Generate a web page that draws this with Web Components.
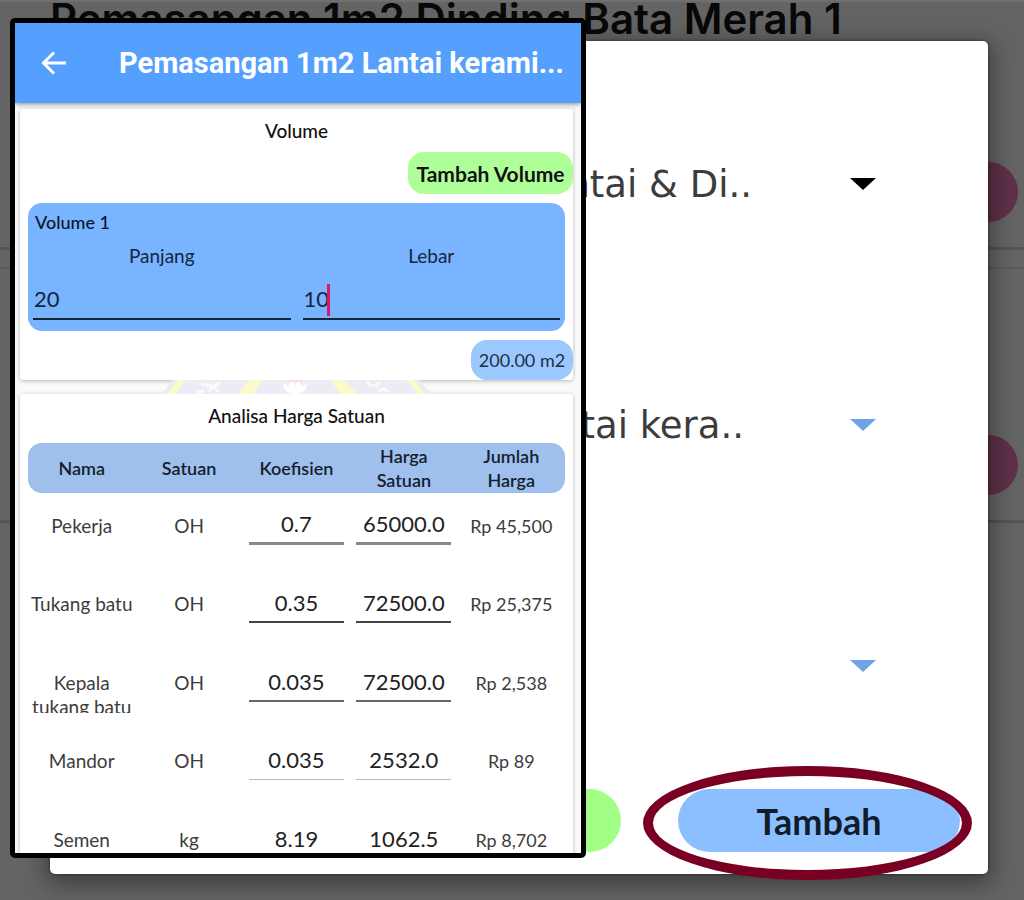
<!DOCTYPE html>
<html lang="id">
<head>
<meta charset="utf-8">
<meta name="viewport" content="width=device-width, initial-scale=1">
<title>Analisa Harga Satuan</title>
<style>
  html, body { margin: 0; height: 100%; }
  body { font-family: Lato, "Liberation Sans", sans-serif; color: #111; overflow: hidden; }
</style>
</head>
<body>
<rab-app></rab-app>
<script>
const define = (name, html, setup) => {
  const template = document.createElement('template');
  template.innerHTML = html;
  customElements.define(name, class extends HTMLElement {
    constructor() {
      super();
      this.attachShadow({ mode: 'open' }).append(template.content.cloneNode(true));
    }
    connectedCallback() { if (setup) setup(this, this.shadowRoot); }
  });
};

/* Dimmed list of work items behind the dialog */
define('work-list', `
<style>
  :host { display: block; overflow: hidden; background: #646464; border-top: 2px solid #707070; box-sizing: border-box; }
  h2 { margin: 0 0 0 50px; height: 116px; font: 600 42px/34px Inter, sans-serif; color: #080808; white-space: nowrap; }
  section { box-sizing: border-box; display: flex; justify-content: flex-end; padding-right: 6px; border-bottom: 3px solid #545454; }
  .first { height: 132px; padding-top: 44px; }
  .second { height: 256px; margin-top: 17px; padding-top: 166px; border-top: 2px solid #5b5b5b; }
  button { width: 150px; height: 60px; border: 0; border-radius: 30px; background: #5f3148; }
</style>
<h2>Pemasangan 1m2 Dinding Bata Merah 1</h2>
<section class="first"><button aria-label="Hapus"></button></section>
<section class="second"><button aria-label="Hapus"></button></section>`);

/* Drop-down row with a triangle marker */
define('drop-field', `
<style>
  :host { display: grid; align-items: center; height: 60px; }
  select, svg { grid-area: 1 / 1; }
  select { appearance: none; border: 0; background: none; width: 100%; height: 60px; padding: 0 var(--text-end, 236px) 0 0; box-sizing: border-box; font: 37px "DejaVu Sans", sans-serif; color: #3c3c3c; text-align: right; text-align-last: right; }
  svg { justify-self: end; margin-right: 111px; width: 28px; height: 12px; fill: var(--arrow, #6fa3e6); pointer-events: none; }
</style>
<select><option></option></select>
<svg viewBox="0 0 28 12"><path d="M1 0H27L14 12Z"/></svg>`,
(host, root) => {
  root.querySelector('option').textContent = host.getAttribute('value');
  root.querySelector('select').setAttribute('aria-label', host.getAttribute('label'));
});

define('add-dialog', `
<style>
  :host { display: flex; flex-direction: column; background: #fff; border-radius: 5px; box-shadow: 0 6px 24px 4px #0006, 0 0 3px #0008; }
  .fields { flex: 1; display: flex; flex-direction: column; gap: 181px; padding-top: 113px; }
  footer { display: flex; justify-content: flex-end; gap: 57px; padding: 0 28px 22px; }
  button { display: block; width: 282px; height: 63px; border: 0; border-radius: 32px; font: 700 36px Lato, sans-serif; color: #111c28; background: #8bbfff; }
  .cancel { background: #a1ff86; }
  .marked { position: relative; }
  .ring { position: absolute; inset: -23px -12px -28px -35px; border: 10px solid #7a0023; border-radius: 50%; pointer-events: none; }
</style>
<div class="fields">
  <drop-field label="Kategori" value="Lantai &amp; Di.." style="--arrow:#000"></drop-field>
  <drop-field label="Pekerjaan" value="Lantai kera.." style="--text-end:244px"></drop-field>
  <drop-field label="Pilihan" value=""></drop-field>
</div>
<footer>
  <button class="cancel" aria-label="Batal"></button>
  <div class="marked"><button>Tambah</button><div class="ring"></div></div>
</footer>`);

define('app-bar', `
<style>
  :host { display: flex; align-items: center; flex: none; height: 80px; padding: 0 12px 0 26px; background: #559fff; box-shadow: 0 1px 5px #0007; position: relative; }
  button { border: 0; background: none; padding: 0; width: 26px; height: 26px; flex: none; }
  svg { display: block; }
  h1 { margin: 0 0 0 52px; font: 700 29px/36px Roboto, sans-serif; color: #fff; white-space: nowrap; }
</style>
<button aria-label="Kembali"><svg width="26" height="26" viewBox="0 0 26 26" fill="none" stroke="#fff" stroke-width="3"><path d="M25 13H3M13 2.500L2.500 13L13 23.500"/></svg></button>
<h1><slot></slot></h1>`);

define('paper-card', `
<style>
  :host { display: block; background: #fff; border-radius: 3px; box-shadow: 0 1px 4px #0004; }
  h2 { margin: 0; padding-top: 8px; font-size: 19px; line-height: 28px; font-weight: 500; text-align: center; color: #111; }
</style>
<h2></h2><slot></slot>`,
(host, root) => { root.querySelector('h2').textContent = host.getAttribute('heading'); });

define('volume-entry', `
<style>
  :host { display: block; margin: 9px 8px; padding: 7px 5px 11px; height: 128px; box-sizing: border-box; border-radius: 14px; background: #78b4ff; color: #14263c; }
  h3 { margin: 0 2px; font-size: 18px; line-height: 24px; font-weight: 500; color: #0c1828; }
  .pair { display: grid; grid-template-columns: 1fr 1fr; gap: 12px; padding-top: 10px; }
  .cell { position: relative; }
  label { display: block; text-align: center; font-size: 19px; line-height: 24px; }
  input { display: block; width: 100%; height: 42px; margin-top: 10px; padding: 0 1px; box-sizing: border-box; border: 0; border-bottom: 2px solid #12243a; background: none; font: 22px Lato, sans-serif; color: #14263c; }
  .caret { position: absolute; left: 24px; top: 40px; width: 3px; height: 32px; background: #d81b60; }
</style>
<h3>Volume 1</h3>
<div class="pair">
  <div class="cell"><label for="p">Panjang</label><input id="p" value="20"></div>
  <div class="cell"><label for="l">Lebar</label><input id="l" value="10"><div class="caret"></div></div>
</div>`);

define('volume-form', `
<style>
  :host { display: block; }
  button { display: block; margin: 7px 0 0 auto; width: 165px; height: 42px; padding: 0; border: 0; border-radius: 16px; background: #afff99; font: 700 21px Lato, sans-serif; color: #111; }
  output { display: block; margin-left: auto; width: 102px; height: 40px; border-radius: 16px; background: #9cc7ff; color: #1c3048; font-size: 18px; line-height: 40px; text-align: center; }
</style>
<button>Tambah Volume</button>
<volume-entry></volume-entry>
<output>200.00 m2</output>`);

define('price-table', `
<style>
  :host { display: block; margin: 13px 8px 0; }
  table { width: 100%; table-layout: fixed; border-collapse: separate; border-spacing: 0; }
  th { height: 50px; padding: 0 12px; background: #9fc0ec; font-size: 18px; line-height: 24px; font-weight: 600; color: #14202e; }
  th:first-child { border-radius: 14px 0 0 14px; }
  th:last-child { border-radius: 0 14px 14px 0; }
  tbody tr { height: 78px; }
  tbody tr:nth-child(even) { height: 79px; }
  td { padding: 0; vertical-align: top; text-align: center; font-size: 19px; line-height: 24px; color: #3c3c3c; }
  td:last-child { font-size: 18px; }
  .text { margin-top: 21px; max-height: 42px; overflow: hidden; }
  input { display: block; width: 95px; height: 40px; margin: 12px auto 0; padding: 0; box-sizing: border-box; border: 0; border-bottom: 2px solid #444; background: none; font: 22px Lato, sans-serif; text-align: center; color: #222; }
  tr:nth-child(1) input { border-bottom: 3px solid #888; }
  tr:nth-child(3) input { border-color: #666; }
  tr:nth-child(4) input { border-bottom: 1px solid #bbb; }
</style>
<table>
  <thead><tr><th>Nama</th><th>Satuan</th><th>Koefisien</th><th>Harga Satuan</th><th>Jumlah Harga</th></tr></thead>
  <tbody></tbody>
</table>`,
(host, root) => {
  const rows = [
    ['Pekerja', 'OH', '0.7', '65000.0', 'Rp 45,500'],
    ['Tukang batu', 'OH', '0.35', '72500.0', 'Rp 25,375'],
    ['Kepala tukang batu', 'OH', '0.035', '72500.0', 'Rp 2,538'],
    ['Mandor', 'OH', '0.035', '2532.0', 'Rp 89'],
    ['Semen', 'kg', '8.19', '1062.5', 'Rp 8,702'],
  ];
  const text = v => `<td><div class="text">${v}</div></td>`;
  const field = (v, label) => `<td><input value="${v}" aria-label="${label}"></td>`;
  root.querySelector('tbody').innerHTML = rows.map(([n, s, k, h, j]) =>
    `<tr>${text(n)}${text(s)}${field(k, 'Koefisien ' + n)}${field(h, 'Harga Satuan ' + n)}${text(j)}</tr>`).join('');
});

/* Strip of the faded emblem that shows between the two cards */
define('emblem-strip', `
<style>:host { display: block; height: 14px; } svg { display: block; margin: 0 auto; }</style>
<svg width="272" height="14" viewBox="0 0 272 14">
  <path fill="#ececf4" d="M12 0H258L271 14H0Z"/>
  <path fill="#fafacb" d="M17 0h7l-9 14H6zM88 0h13l-8 14H77zM170 0h13l13 14h-17zM246 0h7l11 14h-7z"/>
  <path fill="none" stroke="#fafafa" stroke-width="3" d="M40 4l12 2l6 6M47 11l12-9M35 13l8-2M206 2q6 8 13 0M218 12q4-6 9 0"/>
  <path fill="#fff" d="M122 3l5 3l3-5l4 4l4-4l3 5l5-3q0 8-8 11h-8q-8-3-8-11z"/>
  <path fill="none" stroke="#fbe0d6" stroke-width="2" d="M126 1h15"/>
</svg>`);

define('phone-screen', `
<style>
  :host { display: flex; flex-direction: column; box-sizing: border-box; border: 5px solid #000; border-radius: 5px; background: #fafafa; overflow: hidden; }
  main { flex: 1; min-height: 0; padding: 6px 8px 0 5px; overflow: hidden; }
  .rates { min-height: 100%; padding-bottom: 8px; }
</style>
<app-bar>Pemasangan 1m2 Lantai kerami...</app-bar>
<main>
  <paper-card heading="Volume"><volume-form></volume-form></paper-card>
  <emblem-strip></emblem-strip>
  <paper-card class="rates" heading="Analisa Harga Satuan"><price-table></price-table></paper-card>
</main>`);

define('rab-app', `
<style>
  :host { display: grid; grid-template: minmax(0, 1fr) / minmax(0, 1fr); height: 100vh; }
  work-list, add-dialog, phone-screen { grid-area: 1 / 1; min-height: 0; }
  add-dialog { margin: 41px 36px 26px 50px; }
  phone-screen { width: 56.25vw; margin: 18px 0 42px 10px; z-index: 1; }
</style>
<work-list></work-list>
<add-dialog></add-dialog>
<phone-screen></phone-screen>`);
</script>
</body>
</html>
